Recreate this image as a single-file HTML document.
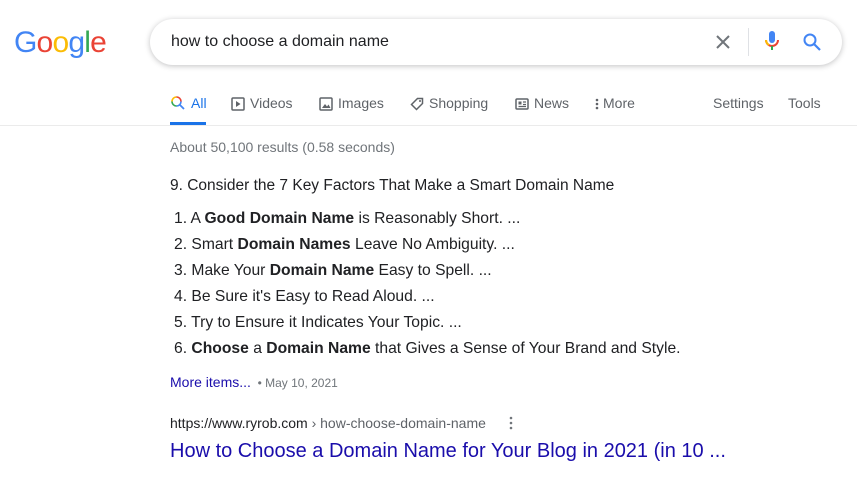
<!DOCTYPE html>
<html><head><meta charset="utf-8"><style>
*{margin:0;padding:0;box-sizing:border-box}
body{width:857px;height:479px;background:#fff;font-family:"Liberation Sans",Arial,sans-serif;position:relative;overflow:hidden;color:#202124}
.abs{position:absolute;white-space:nowrap}
.logo{left:14px;top:26px;font-size:30px;letter-spacing:-0.8px;font-weight:normal}
.box{left:150px;top:19px;width:692px;height:46px;border-radius:23px;box-shadow:0 1px 6px rgba(32,33,36,.28);background:#fff}
.q{left:171px;top:33px;font-size:16px;color:#202124}
.tab{top:95px;font-size:14px;color:#5f6368}
.tab svg{vertical-align:-3px;margin-right:5px}
.line{left:0;top:125px;width:857px;height:1px;background:#ebebeb}
.ul{left:170px;top:122px;width:36px;height:3px;background:#1a73e8}
.li{left:174px;font-size:15.66px;color:#202124}
</style></head><body>
<div class="abs logo"><span style="color:#4285f4">G</span><span style="color:#ea4335">o</span><span style="color:#fbbc05">o</span><span style="color:#4285f4">g</span><span style="color:#34a853">l</span><span style="color:#ea4335">e</span></div>
<div class="abs box"></div>
<div class="abs q">how to choose a domain name</div>
<svg class="abs" style="left:713px;top:32px" width="20" height="20" viewBox="0 0 20 20"><path d="M4 4L16 16M16 4L4 16" stroke="#70757a" stroke-width="2"/></svg>
<div class="abs" style="left:748px;top:28px;width:1px;height:28px;background:#dfe1e5"></div>
<svg class="abs" style="left:763px;top:29px" width="18" height="24" viewBox="0 0 18 24"><rect x="6" y="2" width="6" height="12" rx="3" fill="#4285f4"/><path d="M3 11a6 6 0 0 0 12 0" stroke="#ea4335" stroke-width="2" fill="none"/><path d="M3 11a6 6 0 0 0 3 5" stroke="#fbbc05" stroke-width="2" fill="none"/><rect x="8" y="17" width="2" height="4" fill="#34a853"/></svg>
<svg class="abs" style="left:802px;top:32px" width="20" height="20" viewBox="0 0 20 20"><circle cx="8" cy="8" r="5.5" stroke="#4285f4" stroke-width="2" fill="none"/><path d="M12 12L18 18" stroke="#4285f4" stroke-width="2.2"/></svg>

<div class="abs tab" style="left:170px;color:#1a73e8"><svg width="16" height="16" viewBox="0 0 16 16"><path d="M6.5 2a4.5 4.5 0 0 1 4.5 4.5" stroke="#ea4335" stroke-width="1.6" fill="none"/><path d="M11 6.5A4.5 4.5 0 0 1 6.5 11" stroke="#4285f4" stroke-width="1.6" fill="none"/><path d="M6.5 11A4.5 4.5 0 0 1 2 6.5" stroke="#34a853" stroke-width="1.6" fill="none"/><path d="M2 6.5A4.5 4.5 0 0 1 6.5 2" stroke="#fbbc05" stroke-width="1.6" fill="none"/><path d="M10 10L14 14" stroke="#4285f4" stroke-width="1.8"/></svg>All</div>
<div class="abs tab" style="left:231px"><svg width="14" height="14" viewBox="0 0 14 14"><rect x="1" y="1" width="12" height="12" rx="1" stroke="#5f6368" stroke-width="1.5" fill="none"/><path d="M5 4v6l4.5-3z" fill="#5f6368"/></svg>Videos</div>
<div class="abs tab" style="left:319px"><svg width="14" height="14" viewBox="0 0 14 14"><rect x="1" y="1" width="12" height="12" rx="1" stroke="#5f6368" stroke-width="1.5" fill="none"/><path d="M3 11l3-4 2 2.5 1.5-2 2 3.5z" fill="#5f6368"/></svg>Images</div>
<div class="abs tab" style="left:410px"><svg width="14" height="14" viewBox="0 0 14 14"><path d="M1.5 7.5L7.5 1.5h5v5l-6 6z" stroke="#5f6368" stroke-width="1.5" fill="none"/><circle cx="10" cy="4" r="1" fill="#5f6368"/></svg>Shopping</div>
<div class="abs tab" style="left:515px"><svg width="14" height="14" viewBox="0 0 14 14"><rect x="1" y="2" width="12" height="10" rx="1" stroke="#5f6368" stroke-width="1.5" fill="none"/><rect x="3.5" y="4.5" width="3" height="3" fill="#5f6368"/><path d="M8 5h3M8 7.5h3M3.5 9.5h7.5" stroke="#5f6368" stroke-width="1.2"/></svg>News</div>
<div class="abs tab" style="left:594px"><svg width="6" height="14" viewBox="0 0 6 14" style="margin-right:3px"><circle cx="3" cy="3" r="1.3" fill="#5f6368"/><circle cx="3" cy="7" r="1.3" fill="#5f6368"/><circle cx="3" cy="11" r="1.3" fill="#5f6368"/></svg>More</div>
<div class="abs tab" style="left:713px">Settings</div>
<div class="abs tab" style="left:788px">Tools</div>
<div class="abs ul"></div>
<div class="abs line"></div>

<div class="abs" style="left:170px;top:139px;font-size:14px;color:#70757a">About 50,100 results (0.58 seconds)</div>
<div class="abs" style="left:170px;top:177px;font-size:15.5px;color:#202124">9. Consider the 7 Key Factors That Make a Smart Domain Name</div>
<div class="abs li" style="top:210px">1. A <b>Good Domain Name</b> is Reasonably Short. ...</div>
<div class="abs li" style="top:236px">2. Smart <b>Domain Names</b> Leave No Ambiguity. ...</div>
<div class="abs li" style="top:262px">3. Make Your <b>Domain Name</b> Easy to Spell. ...</div>
<div class="abs li" style="top:288px">4. Be Sure it's Easy to Read Aloud. ...</div>
<div class="abs li" style="top:314px">5. Try to Ensure it Indicates Your Topic. ...</div>
<div class="abs li" style="top:340px">6. <b>Choose</b> a <b>Domain Name</b> that Gives a Sense of Your Brand and Style.</div>
<div class="abs" style="left:170px;top:374px;font-size:14px"><span style="color:#1a0dab">More items...</span><span style="color:#70757a;font-size:12px"> &nbsp;•&nbsp;May 10, 2021</span></div>
<div class="abs" style="left:170px;top:415px;font-size:14px;color:#202124">https://www.ryrob.com<span style="color:#5f6368"> › how-choose-domain-name</span></div>
<svg class="abs" style="left:508px;top:415px" width="6" height="16" viewBox="0 0 6 16"><circle cx="3" cy="3" r="1.3" fill="#70757a"/><circle cx="3" cy="8" r="1.3" fill="#70757a"/><circle cx="3" cy="13" r="1.3" fill="#70757a"/></svg>
<div class="abs" style="left:170px;top:440px;font-size:20px;color:#1a0dab">How to Choose a Domain Name for Your Blog in 2021 (in 10 ...</div>
</body></html>
